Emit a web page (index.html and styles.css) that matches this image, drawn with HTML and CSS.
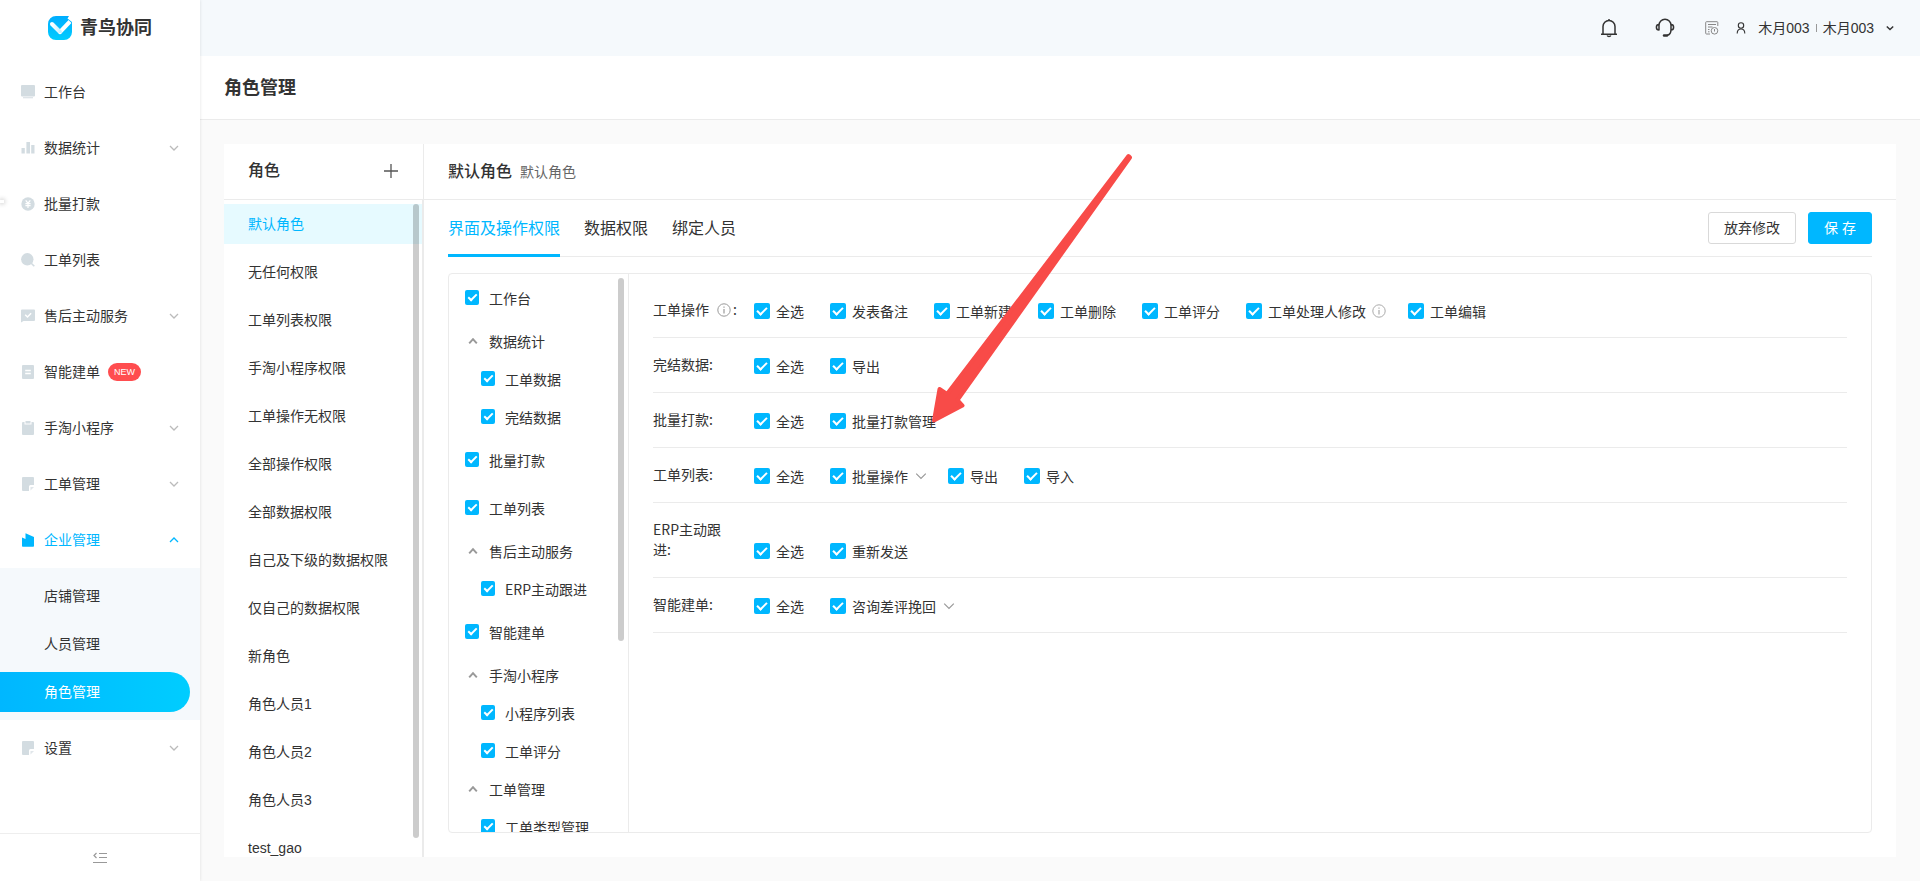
FILE: index.html
```html
<!DOCTYPE html>
<html lang="zh-CN">
<head>
<meta charset="utf-8">
<meta name="viewport" content="width=device-width, initial-scale=1">
<title>角色管理 - 青鸟协同</title>
<link rel="stylesheet" href="styles.css">
</head>
<body>
<svg class="sprite" aria-hidden="true">
  <symbol id="chevron" viewBox="0 0 10 10"><path d="M1 3l4 4 4-4" fill="none" stroke="currentColor"/></symbol>
  <symbol id="caret-up" viewBox="0 0 10 10"><path d="M1.2 7.4L5 3.2l3.8 4.2" fill="none" stroke="currentColor"/></symbol>
  <symbol id="info" viewBox="0 0 14 14"><circle cx="7" cy="7" r="6.2" fill="none" stroke="currentColor"/><path d="M7 6v4.4M7 3.4v1.3" stroke="currentColor" stroke-width="1.2"/></symbol>
  <symbol id="note" viewBox="0 0 14 14"><path d="M2 0h10a1 1 0 0 1 1 1v7H9.5a1.500 1.500 0 0 0-1.500 1.500V14H2a1 1 0 0 1-1-1V1a1 1 0 0 1 1-1z" fill="currentColor"/><path d="M9.500 13.500v-3.500h3.500z" fill="currentColor" opacity=".7"/></symbol>
</svg>

<div class="app">
  <aside class="sidebar">
    <div class="brand">
      <svg class="brand-logo" viewBox="0 0 24 24" aria-hidden="true">
        <defs><linearGradient id="lg" x1="0" y1="0" x2="0" y2="1"><stop offset="0" stop-color="#00adff"/><stop offset="1" stop-color="#00ccff"/></linearGradient>
        <linearGradient id="lc" x1="0" y1="0" x2="1" y2="0"><stop offset="0" stop-color="#fff"/><stop offset="1" stop-color="#c9f0ff"/></linearGradient></defs>
        <path d="M8 0h13l-1.500 2.500L24 6v10a8 8 0 0 1-8 8H8a8 8 0 0 1-8-8V8a8 8 0 0 1 8-8z" fill="url(#lg)"/>
        <path d="M12 16L22 5.500" stroke="#fff" stroke-width="4"/>
        <path d="M4 8l8 8" stroke="url(#lc)" stroke-width="4" stroke-linecap="round"/>
        <path d="M10.600 17l1.400 1 1.400-1" stroke="#fff" stroke-width="1" fill="#fff"/>
      </svg>
      <span>青鸟协同</span>
    </div>

    <nav class="menu">
      <a class="menu-item" href="#"><svg class="menu-icon" viewBox="0 0 14 14"><path d="M1 0h12a1 1 0 0 1 1 1v9.500a1 1 0 0 1-1 1H1a1 1 0 0 1-1-1V1a1 1 0 0 1 1-1zM2 12.300h10v1H2z" fill="currentColor"/></svg><span>工作台</span></a>
      <a class="menu-item" href="#"><svg class="menu-icon" viewBox="0 0 14 14"><path d="M.5 7h3.300v5.500H.5zM5.400 1h3.600v11.500H5.400zM10.200 4h3.300v8.500h-3.300z" fill="currentColor"/></svg><span>数据统计</span><svg class="menu-arrow"><use href="#chevron"/></svg></a>
      <a class="menu-item" href="#"><svg class="menu-icon" viewBox="0 0 14 14"><circle cx="7" cy="7" r="6.700" fill="currentColor"/><path d="M4.700 3.300L7 6.200l2.300-2.900M7 6v5M4.400 6.700h5.200M4.400 8.700h5.200" stroke="#fff" stroke-width="1.200" fill="none"/></svg><span>批量打款</span></a>
      <a class="menu-item" href="#"><svg class="menu-icon" viewBox="0 0 14 14"><circle cx="6.300" cy="6.300" r="6.200" fill="currentColor"/><path d="M10 10l3.300 3.300" stroke="currentColor" stroke-width="1.600"/></svg><span>工单列表</span></a>
      <a class="menu-item" href="#"><svg class="menu-icon" viewBox="0 0 14 14"><path d="M1 .5h12a1 1 0 0 1 1 1V11a1 1 0 0 1-1 1H2.500L0 13.500v-12a1 1 0 0 1 1-1z" fill="currentColor"/><path d="M4.200 5.800l2.300 2.200 3.600-3.800" stroke="#fff" stroke-width="1.500" fill="none"/></svg><span>售后主动服务</span><svg class="menu-arrow"><use href="#chevron"/></svg></a>
      <a class="menu-item" href="#"><svg class="menu-icon" viewBox="0 0 14 14"><rect x="1" width="12" height="14" rx="1" fill="currentColor"/><path d="M4.200 5.500h5.600M4.200 8.500h5.600" stroke="#fff" stroke-width="1.300"/></svg><span>智能建单</span><span class="badge">NEW</span></a>
      <a class="menu-item" href="#"><svg class="menu-icon" viewBox="0 0 14 14"><path d="M2 1h1.500v2.500h7V1H12a1 1 0 0 1 1 1v11a1 1 0 0 1-1 1H2a1 1 0 0 1-1-1V2a1 1 0 0 1 1-1zM4.500 0h5v2.500h-5z" fill="currentColor"/></svg><span>手淘小程序</span><svg class="menu-arrow"><use href="#chevron"/></svg></a>
      <a class="menu-item" href="#"><svg class="menu-icon"><use href="#note"/></svg><span>工单管理</span><svg class="menu-arrow"><use href="#chevron"/></svg></a>
      <a class="menu-item is-open" href="#"><svg class="menu-icon" viewBox="0 0 14 14"><path d="M1 4.500l3.500 1.500V.3L13 4v9a.8.800 0 0 1-.8.800H1.800A.8.800 0 0 1 1 13z" fill="currentColor"/></svg><span>企业管理</span><svg class="menu-arrow"><use href="#chevron"/></svg></a>
      <div class="submenu">
        <a class="submenu-item" href="#">店铺管理</a>
        <a class="submenu-item" href="#">人员管理</a>
        <a class="submenu-item is-active" href="#">角色管理</a>
      </div>
      <a class="menu-item" href="#"><svg class="menu-icon"><use href="#note"/></svg><span>设置</span><svg class="menu-arrow"><use href="#chevron"/></svg></a>
    </nav>

    <div class="sidebar-foot">
      <button class="icon-button" type="button" aria-label="收起菜单"><svg width="14" height="12" viewBox="0 0 14 12"><path d="M3.500 1L1 3.500 3.500 6M6 1.500h8M6 5.500h8M0 10.500h14" fill="none" stroke="currentColor" stroke-width="1.200"/></svg></button>
    </div>
    <span class="edge-handle" aria-hidden="true"></span>
  </aside>

  <div class="page">
    <header class="topbar">
      <button class="icon-button top-icon" type="button" aria-label="通知"><svg width="18" height="20" viewBox="0 0 18 20"><path d="M1 16.200h16M3 16V8.500a6 6 0 0 1 12 0V16M9 1v1.500M7.200 17.500a1.900 1.500 0 0 0 3.600 0" fill="none" stroke="currentColor" stroke-width="1.500"/></svg></button>
      <button class="icon-button top-icon" type="button" aria-label="客服"><svg width="20" height="20" viewBox="0 0 20 20"><path d="M4 12.500V7.200a6 6 0 0 1 12 0v4.300c0 3.500-1.600 5.500-4 5.800M4 6.500c-1.800 0-2.600 1-2.600 2.700S2.200 12 4 12M16 6.500c1.800 0 2.600 1 2.600 2.700S17.800 12 16 12" fill="none" stroke="currentColor" stroke-width="1.500"/><path d="M9 17.500h3" stroke="currentColor" stroke-width="2.400" stroke-linecap="round"/></svg></button>
      <button class="icon-button top-log" type="button" aria-label="日志"><svg width="14" height="14" viewBox="0 0 14 14"><path d="M5 13H1.500a.8.800 0 0 1-.8-.8V1.500a.8.800 0 0 1 .8-.8h10.500a.8.800 0 0 1 .8.800V5M3 3.500h8M3 6h4.500M3 8.500h1.500M3 10.800h1.500" fill="none" stroke="currentColor"/><circle cx="9.500" cy="9.800" r="3.300" fill="none" stroke="currentColor"/><path d="M9.500 8v2.500" fill="none" stroke="currentColor"/></svg></button>
      <button class="account" type="button">
        <svg width="10" height="12" viewBox="0 0 10 12"><circle cx="5" cy="3.500" r="2.700" fill="none" stroke="currentColor" stroke-width="1.100"/><path d="M1.200 11.500c0-3 1.500-4.500 3.800-4.500s3.800 1.500 3.800 4.500" fill="none" stroke="currentColor" stroke-width="1.100"/></svg>
        <span>木月003</span><i class="account-sep"></i><span>木月003</span>
        <svg class="account-arrow" width="8" height="8"><use href="#chevron"/></svg>
      </button>
    </header>

    <div class="titlebar"><h1>角色管理</h1></div>

    <main class="content">
      <section class="roles">
        <div class="roles-head"><h2>角色</h2><button class="icon-button" type="button" aria-label="新增角色"><svg width="14" height="14" viewBox="0 0 14 14"><path d="M7 0v14M0 7h14" stroke="#555" stroke-width="1.300"/></svg></button></div>
        <div class="roles-body">
          <ul class="roles-list">
            <li class="is-active">默认角色</li>
            <li>无任何权限</li>
            <li>工单列表权限</li>
            <li>手淘小程序权限</li>
            <li>工单操作无权限</li>
            <li>全部操作权限</li>
            <li>全部数据权限</li>
            <li>自己及下级的数据权限</li>
            <li>仅自己的数据权限</li>
            <li>新角色</li>
            <li>角色人员1</li>
            <li>角色人员2</li>
            <li>角色人员3</li>
            <li>test_gao</li>
          </ul>
          <span class="thumb thumb-roles"></span>
        </div>
      </section>

      <section class="detail">
        <div class="detail-head"><h2>默认角色</h2><span>默认角色</span></div>
        <div class="detail-body">
          <div class="tabs">
            <button class="tab is-active" type="button">界面及操作权限</button>
            <button class="tab" type="button">数据权限</button>
            <button class="tab" type="button">绑定人员</button>
            <div class="actions">
              <button class="btn" type="button">放弃修改</button>
              <button class="btn btn-primary" type="button">保 存</button>
            </div>
          </div>

          <div class="board">
            <div class="tree">
              <div class="tree-list">
                <label class="node node-leaf"><input type="checkbox" checked>工作台</label>
                <div class="node"><svg class="node-caret"><use href="#caret-up"/></svg>数据统计</div>
                <label class="node node-child"><input type="checkbox" checked>工单数据</label>
                <label class="node node-child"><input type="checkbox" checked>完结数据</label>
                <label class="node node-leaf"><input type="checkbox" checked>批量打款</label>
                <label class="node node-leaf"><input type="checkbox" checked>工单列表</label>
                <div class="node"><svg class="node-caret"><use href="#caret-up"/></svg>售后主动服务</div>
                <label class="node node-child"><input type="checkbox" checked>ERP主动跟进</label>
                <label class="node node-leaf"><input type="checkbox" checked>智能建单</label>
                <div class="node"><svg class="node-caret"><use href="#caret-up"/></svg>手淘小程序</div>
                <label class="node node-child"><input type="checkbox" checked>小程序列表</label>
                <label class="node node-child"><input type="checkbox" checked>工单评分</label>
                <div class="node"><svg class="node-caret"><use href="#caret-up"/></svg>工单管理</div>
                <label class="node node-child"><input type="checkbox" checked>工单类型管理</label>
              </div>
              <span class="thumb thumb-tree"></span>
            </div>

            <div class="perms">
              <div class="perm">
                <div class="perm-name">工单操作<svg class="name-info"><use href="#info"/></svg>:</div>
                <div class="perm-options">
                  <label class="option"><input type="checkbox" checked>全选</label>
                  <label class="option"><input type="checkbox" checked>发表备注</label>
                  <label class="option"><input type="checkbox" checked>工单新建</label>
                  <label class="option"><input type="checkbox" checked>工单删除</label>
                  <label class="option"><input type="checkbox" checked>工单评分</label>
                  <label class="option option-info"><input type="checkbox" checked>工单处理人修改<svg class="option-icon"><use href="#info"/></svg></label>
                  <label class="option"><input type="checkbox" checked>工单编辑</label>
                </div>
              </div>
              <div class="perm">
                <div class="perm-name">完结数据:</div>
                <div class="perm-options">
                  <label class="option"><input type="checkbox" checked>全选</label>
                  <label class="option"><input type="checkbox" checked>导出</label>
                </div>
              </div>
              <div class="perm">
                <div class="perm-name">批量打款:</div>
                <div class="perm-options">
                  <label class="option"><input type="checkbox" checked>全选</label>
                  <label class="option"><input type="checkbox" checked>批量打款管理</label>
                </div>
              </div>
              <div class="perm">
                <div class="perm-name">工单列表:</div>
                <div class="perm-options">
                  <label class="option"><input type="checkbox" checked>全选</label>
                  <label class="option option-more"><input type="checkbox" checked>批量操作<svg class="option-arrow"><use href="#chevron"/></svg></label>
                  <label class="option"><input type="checkbox" checked>导出</label>
                  <label class="option"><input type="checkbox" checked>导入</label>
                </div>
              </div>
              <div class="perm">
                <div class="perm-name">ERP主动跟进:</div>
                <div class="perm-options">
                  <label class="option"><input type="checkbox" checked>全选</label>
                  <label class="option"><input type="checkbox" checked>重新发送</label>
                </div>
              </div>
              <div class="perm">
                <div class="perm-name">智能建单:</div>
                <div class="perm-options">
                  <label class="option"><input type="checkbox" checked>全选</label>
                  <label class="option option-more"><input type="checkbox" checked>咨询差评挽回<svg class="option-arrow"><use href="#chevron"/></svg></label>
                </div>
              </div>
            </div>
          </div>
        </div>
        <svg class="pointer" width="206" height="272" viewBox="0 0 206 272" aria-hidden="true">
          <path d="M200.500 3L202 4.500 29.500 247l5 5.500L6 267.500 11.500 236l7.500 5z" fill="#f84b48" stroke="#f84b48" stroke-width="4" stroke-linejoin="round"/>
        </svg>
      </section>
    </main>
  </div>
</div>
</body>
</html>
```
FILE: styles.css
```css
*, ::after { box-sizing: border-box; }

body {
  margin: 0;
  font: 14px/20px "Liberation Sans", "Noto Sans CJK SC", sans-serif;
  color: #333;
  background: #fafafa;
}

h1, h2, ul { margin: 0; padding: 0; }
ul { list-style: none; }
a { color: inherit; text-decoration: none; }
button { font: inherit; color: inherit; cursor: pointer; }
svg { flex: none; }

.sprite { position: absolute; width: 0; height: 0; }

.icon-button {
  display: flex;
  padding: 0;
  border: 0;
  background: none;
}

.app { display: flex; height: 100vh; overflow: hidden; }

/* Sidebar */
.sidebar {
  position: relative;
  z-index: 1;
  display: flex;
  flex-direction: column;
  flex: none;
  width: 200px;
  background: #fff;
  box-shadow: 0 0 3px rgba(0, 0, 0, .12);
}

.brand {
  display: flex;
  align-items: center;
  justify-content: center;
  gap: 8px;
  height: 56px;
  font-size: 18px;
  font-weight: 700;
}

.brand-logo { width: 24px; height: 24px; }

.menu { flex: 1; padding-top: 8px; }

.menu-item {
  display: flex;
  align-items: center;
  height: 56px;
  padding: 0 21px;
}

.menu-icon {
  width: 14px;
  height: 14px;
  margin-right: 9px;
  color: #d3dce1;
}

.menu-arrow {
  width: 10px;
  height: 10px;
  margin-left: auto;
  color: #bbb;
  stroke-width: 1.3;
}

.menu-item.is-open, .is-open .menu-icon, .is-open .menu-arrow { color: #00b7ff; }
.is-open .menu-arrow { transform: rotate(180deg); }

.badge {
  margin-left: 8px;
  padding: 0 6px;
  border-radius: 9px;
  background: #ff4d4f;
  color: #fff;
  font-size: 9px;
  line-height: 18px;
}

.submenu {
  display: flex;
  flex-direction: column;
  gap: 8px;
  padding: 8px 10px 8px 0;
  background: #f5f9fc;
}

.submenu-item { padding: 10px 0 10px 44px; }

.submenu-item.is-active {
  border-radius: 0 20px 20px 0;
  background: linear-gradient(90deg, #00b7ff, #00cdff);
  color: #fff;
}

.sidebar-foot {
  display: flex;
  align-items: center;
  justify-content: center;
  height: 48px;
  border-top: 1px solid #eee;
  color: #999;
}

.edge-handle {
  position: absolute;
  top: 200px;
  left: 0;
  width: 4px;
  height: 3px;
  background: #fff;
  box-shadow: 0 0 5px rgba(0, 0, 0, .45);
}

/* Top bars */
.page { display: flex; flex-direction: column; flex: 1; min-width: 0; }

.topbar {
  display: flex;
  align-items: center;
  justify-content: flex-end;
  height: 56px;
  padding-right: 26px;
  background: #f5f9fc;
}

.top-icon { margin-right: 37px; }
.top-icon + .top-log { margin-left: -7px; }
.top-log { margin-right: 17px; color: #888; }

.account {
  display: flex;
  align-items: center;
  padding: 0;
  border: 0;
  background: none;
}

.account > svg:first-child { margin-right: 12px; }
.account-sep { width: 1px; height: 8px; margin: 0 6px; background: #999; }
.account-arrow { margin-left: 12px; stroke-width: 1.8; }

.titlebar {
  display: flex;
  align-items: center;
  height: 64px;
  padding: 0 24px;
  border-bottom: 1px solid #ebebeb;
  background: #fff;
}

h1 { font-size: 18px; line-height: 28px; font-weight: 700; }
h2 { font-size: 16px; line-height: 24px; font-weight: 500; }

/* Panels */
.content {
  display: flex;
  flex: 1;
  min-height: 0;
  margin: 24px;
  background: #fff;
}

.roles {
  display: flex;
  flex-direction: column;
  flex: none;
  width: 200px;
  border-right: 1px solid #ebebeb;
}

.roles-head {
  display: flex;
  align-items: center;
  justify-content: space-between;
  height: 56px;
  padding: 0 25px 2px 24px;
  border-bottom: 1px solid #ebebeb;
}

.roles-body {
  position: relative;
  flex: 1;
  min-height: 0;
  padding-top: 4px;
  overflow: hidden;
  border-right: 1px solid #ebebeb;
}

.roles-list { display: flex; flex-direction: column; gap: 8px; }
.roles-list li { flex: none; padding: 10px 24px; }
.roles-list .is-active { background: #e6faff; color: #00b7ff; }

.thumb {
  position: absolute;
  top: 4px;
  right: 3px;
  width: 6px;
  border-radius: 3px;
  background: rgba(0, 0, 0, .2);
}

.thumb-roles { bottom: 19px; }
.thumb-tree { height: 65%; right: 4px; }

.detail {
  position: relative;
  display: flex;
  flex-direction: column;
  flex: 1;
  min-width: 0;
}

.detail-head {
  display: flex;
  align-items: center;
  gap: 8px;
  height: 56px;
  padding: 0 24px;
  border-bottom: 1px solid #ebebeb;
}

.detail-head span { color: #666; }

.detail-body {
  display: flex;
  flex-direction: column;
  flex: 1;
  min-height: 0;
  padding: 0 24px 24px;
}

.tabs {
  display: flex;
  align-items: center;
  gap: 24px;
  height: 57px;
  border-bottom: 1px solid #ebebeb;
}

.tab {
  align-self: stretch;
  margin-bottom: -1px;
  padding: 4px 0 0;
  border: 0;
  border-bottom: 3px solid transparent;
  background: none;
  font-size: 16px;
}

.tab.is-active { border-bottom-color: #00b7ff; color: #00b7ff; }

.actions { display: flex; gap: 12px; margin-left: auto; }

.btn {
  height: 32px;
  padding: 0 15px;
  border: 1px solid #d9d9d9;
  border-radius: 3px;
  background: #fff;
}

.btn-primary { border-color: #00b7ff; background: #00b7ff; color: #fff; }

.board {
  display: flex;
  flex: 1;
  min-height: 0;
  margin-top: 16px;
  overflow: hidden;
  border: 1px solid #ebebeb;
  border-radius: 4px;
  font-family: "Noto Sans CJK SC", sans-serif;
}

/* Checkboxes */
input[type="checkbox"] {
  appearance: none;
  position: relative;
  flex: none;
  width: 16px;
  height: 16px;
  margin: 0;
  border-radius: 2px;
  background: #00b7ff;
}

input[type="checkbox"]::after {
  content: "";
  position: absolute;
  top: 4px;
  left: 3px;
  width: 10px;
  height: 6px;
  border: solid #fff;
  border-width: 0 0 2px 2px;
  transform: rotate(-45deg);
}

/* Permission tree */
.tree {
  position: relative;
  flex: none;
  width: 180px;
  overflow: hidden;
  border-right: 1px solid #ebebeb;
}

.node {
  display: flex;
  align-items: center;
  height: 38px;
  padding: 0 0 1px 16px;
}

.node-leaf { height: 48px; }
.node-child { padding-left: 32px; }
.node input[type="checkbox"] { width: 14px; height: 15px; margin-right: 10px; }
.node input[type="checkbox"]::after { left: 3px; width: 9px; height: 5px; }
.node-caret { width: 10px; height: 10px; margin: 0 11px 0 3px; color: #999; stroke-width: 2; }

/* Permission rows */
.perms { flex: 1; min-width: 0; padding: 9px 24px; }

.perm {
  display: flex;
  align-items: flex-end;
  padding: 16px 0;
  border-bottom: 1px solid #ebebeb;
}

.perm-name { width: 77px; margin: 0 24px 2px 0; }

.name-info {
  width: 14px;
  height: 14px;
  margin: 0 2px 0 8px;
  vertical-align: -2px;
  color: #999;
}

.perm-name:has(.name-info) { width: 85px; margin-right: 16px; }

.perm-options { display: flex; flex-wrap: wrap; row-gap: 8px; }

.option { display: flex; align-items: center; margin-right: 26px; }
.option input { margin-right: 6px; }
.option-info { margin-right: 22px; }
.option-more { margin-right: 20px; }
.option-icon { width: 14px; height: 14px; margin-left: 6px; color: #aaa; }
.option-arrow { width: 12px; height: 12px; margin: 0 1px 0 7px; color: #999; }

/* Annotation arrow over the panel */
.pointer { position: absolute; left: 504px; top: 9px; pointer-events: none; }
```
